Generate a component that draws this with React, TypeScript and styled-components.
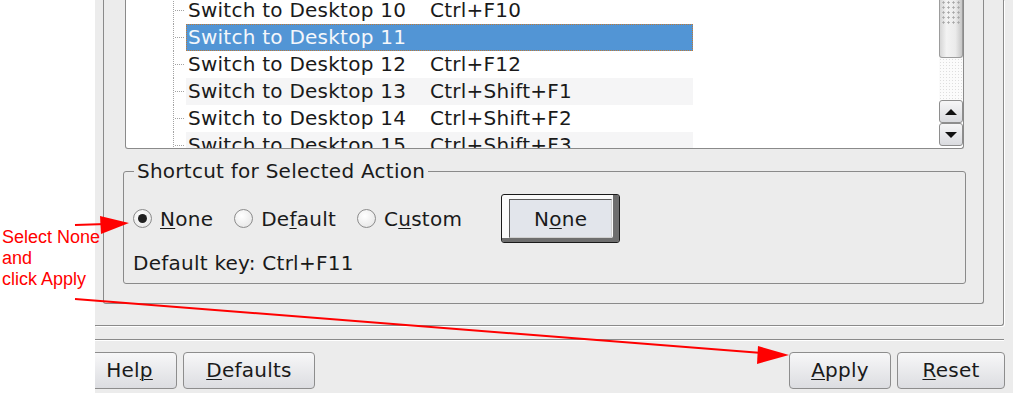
import React from 'react';
import styled, { createGlobalStyle } from 'styled-components';

const GlobalStyle = createGlobalStyle`
  html, body { margin: 0; padding: 0; background: #ffffff; }
  body { font-family: "DejaVu Sans", Verdana, sans-serif; }
`;

const Page = styled.div`
  position: relative;
  width: 1013px;
  height: 407px;
  display: flex;
  overflow: hidden;
  background: #ffffff;
`;

const Gutter = styled.div`
  position: relative;
  z-index: 2;
  width: 95px;
  flex: none;
  box-sizing: border-box;
  padding: 227px 0 0 2px;
  font-family: "Liberation Sans", Arial, sans-serif;
  font-size: 18px;
  line-height: 21px;
  color: #ff0000;
  white-space: nowrap;
`;

const Overlay = styled.svg`
  position: absolute;
  left: 0;
  top: 0;
  z-index: 3;
  pointer-events: none;
`;

const Dialog = styled.div`
  width: 918px;
  height: 393px;
  flex: none;
  display: flex;
  flex-direction: column;
  background: #ececec;
  font-family: "DejaVu Sans", "Bitstream Vera Sans", sans-serif;
  font-size: 20px;
  letter-spacing: 0.25px;
  color: #1a1a1a;
`;

const TabPane = styled.div`
  width: 909px;
  height: 326px;
  box-sizing: border-box;
  padding-left: 8px;
  border-right: 1px solid #8a8a8a;
  border-bottom: 1px solid #8a8a8a;
  border-bottom-right-radius: 3px;
  box-shadow: 1px 1px 0 #ffffff;
`;

const InnerFrame = styled.div`
  width: 881px;
  height: 304px;
  box-sizing: border-box;
  border: 1px solid #8a8a8a;
  border-top: none;
  border-radius: 0 0 3px 3px;
  display: flex;
  flex-direction: column;
`;

const ListBox = styled.div`
  margin-left: 21px;
  width: 839px;
  height: 149px;
  box-sizing: border-box;
  border: 1px solid #8a8a8a;
  border-top: none;
  border-radius: 0 0 3px 3px;
  background: #ffffff;
  display: flex;
  overflow: hidden;
`;

const Rows = styled.div`
  flex: 1;
  overflow: hidden;
`;

const RowsInner = styled.div`
  margin-top: -3px;
`;

const Row = styled.div`
  display: flex;
  height: 27px;
`;

const TreeCell = styled.div`
  position: relative;
  width: 60px;
  flex: none;
  &::before {
    content: '';
    position: absolute;
    left: 47px;
    top: 0;
    bottom: 0;
    width: 1px;
    background: repeating-linear-gradient(to bottom, #a3a3a3 0 1px, transparent 1px 2px);
  }
  &::after {
    content: '';
    position: absolute;
    left: 49px;
    top: 13px;
    width: 10px;
    height: 1px;
    background: repeating-linear-gradient(to right, #a3a3a3 0 1px, transparent 1px 2px);
  }
`;

const Item = styled.div<{ $alt?: boolean; $selected?: boolean }>`
  width: 507px;
  box-sizing: border-box;
  display: flex;
  padding-left: 2px;
  line-height: 27px;
  white-space: nowrap;
  background: ${p => (p.$selected ? '#5295d5' : p.$alt ? '#f5f5f6' : 'transparent')};
  color: ${p => (p.$selected ? '#f4f7fb' : '#1a1a1a')};
  outline: ${p => (p.$selected ? '1px dotted #c07a36' : 'none')};
  outline-offset: -1px;
`;

const ActionName = styled.span`
  width: 242px;
  flex: none;
`;

const Scrollbar = styled.div`
  width: 24px;
  flex: none;
  display: flex;
  flex-direction: column;
`;

const Thumb = styled.div`
  height: 58px;
  box-sizing: border-box;
  border: 1px solid #9c9c9c;
  border-top: none;
  border-radius: 0 0 3px 3px;
  background: linear-gradient(to right, #d6d6d6, #f3f3f3 30%, #ebebeb 70%, #c6c6c6);
  display: flex;
  justify-content: center;
`;

const Grip = styled.div`
  width: 20px;
  height: 26px;
  background-image: radial-gradient(circle, #a8a8a8 0.9px, transparent 1.3px);
  background-size: 5px 5px;
`;

const Track = styled.div`
  height: 42px;
  background-color: #fbfbfb;
  background-image: radial-gradient(circle, #dedede 0.6px, transparent 0.9px);
  background-size: 3px 3px;
`;

const StepButton = styled.div`
  height: 23px;
  box-sizing: border-box;
  border: 1px solid #8e8e8e;
  border-radius: 3px;
  background: linear-gradient(#f6f6f7, #dadbdf);
  display: flex;
  align-items: center;
  justify-content: center;
`;

const Tri = styled.span<{ $down?: boolean }>`
  width: 0;
  height: 0;
  border-left: 6px solid transparent;
  border-right: 6px solid transparent;
  ${p => (p.$down ? 'border-top: 6px solid #111;' : 'border-bottom: 6px solid #111;')}
`;

const GroupBox = styled.fieldset`
  margin: 10px 0 0 19px;
  width: 843px;
  min-width: 0;
  box-sizing: border-box;
  padding: 11px 9px 8px 9px;
  border: 1px solid #8a8a8a;
  border-radius: 3px;
`;

const GroupTitle = styled.legend`
  margin-left: 1px;
  padding: 0 3px;
  line-height: 24px;
`;

const ChoiceRow = styled.div`
  display: flex;
  align-items: center;
  height: 49px;
`;

const Choice = styled.label`
  display: flex;
  align-items: center;
  gap: 8px;
  margin-right: 21px;
  line-height: 24px;
`;

const RadioDot = styled.span<{ $on?: boolean }>`
  width: 19px;
  height: 19px;
  box-sizing: border-box;
  border-radius: 50%;
  border: 1px solid #8b8b8b;
  background: radial-gradient(circle at 40% 35%, #ffffff, #e2e2e2);
  display: flex;
  align-items: center;
  justify-content: center;
  &::after {
    content: '';
    display: ${p => (p.$on ? 'block' : 'none')};
    width: 9px;
    height: 9px;
    border-radius: 50%;
    background: #202020;
  }
`;

const Key = styled.u`
  text-decoration: underline;
  text-underline-offset: 2px;
  text-decoration-thickness: 1px;
`;

const KeyCapture = styled.div`
  margin-left: 18px;
  width: 119px;
  height: 49px;
  box-sizing: border-box;
  border: 1px solid #1a1a1a;
  border-radius: 3px;
  padding: 4px 7px 4px 7px;
  background: #fafafa;
  box-shadow: inset -6px -4px 0 #6e6e6e;
  display: flex;
`;

const KeyFace = styled.div`
  flex: 1;
  border: 1px solid;
  border-color: #5a5a5a #d0d0d0 #d0d0d0 #5a5a5a;
  background: #e2e5eb;
  display: flex;
  align-items: center;
  justify-content: center;
`;

const DefaultKey = styled.div`
  margin-top: 8px;
  line-height: 24px;
`;

const Separator = styled.div`
  margin-top: 13px;
  width: 909px;
  height: 1px;
  background: #8a8a8a;
  box-shadow: 0 1px 0 #ffffff;
`;

const ButtonBar = styled.div`
  margin-top: 12px;
  display: flex;
  height: 37px;
  overflow: hidden;
`;

const PushButton = styled.button<{ $w: number; $ml?: number; $mr?: number }>`
  width: ${p => p.$w}px;
  margin-left: ${p => p.$ml ?? 0}px;
  margin-right: ${p => p.$mr ?? 0}px;
  height: 37px;
  flex: none;
  box-sizing: border-box;
  padding: 0 0 2px;
  border: 1px solid #8d8d8d;
  border-radius: 4px;
  background: linear-gradient(#f7f7f8, #dcdde1);
  font: inherit;
  letter-spacing: inherit;
  color: #1a1a1a;
`;

const Spacer = styled.div`
  flex: 1;
`;

const actions = [
  { name: 'Switch to Desktop 10', key: 'Ctrl+F10' },
  { name: 'Switch to Desktop 11', key: '' },
  { name: 'Switch to Desktop 12', key: 'Ctrl+F12' },
  { name: 'Switch to Desktop 13', key: 'Ctrl+Shift+F1' },
  { name: 'Switch to Desktop 14', key: 'Ctrl+Shift+F2' },
  { name: 'Switch to Desktop 15', key: 'Ctrl+Shift+F3' },
];

export default function App() {
  return (
    <Page>
      <GlobalStyle />
      <Gutter>
        Select None
        <br />
        and
        <br />
        click Apply
      </Gutter>
      <Dialog>
        <TabPane>
          <InnerFrame>
            <ListBox>
              <Rows>
                <RowsInner>
                  {actions.map((a, i) => (
                    <Row key={a.name}>
                      <TreeCell />
                      <Item $alt={i % 2 === 1} $selected={i === 1}>
                        <ActionName>{a.name}</ActionName>
                        <span>{a.key}</span>
                      </Item>
                    </Row>
                  ))}
                </RowsInner>
              </Rows>
              <Scrollbar>
                <Thumb>
                  <Grip />
                </Thumb>
                <Track />
                <StepButton>
                  <Tri />
                </StepButton>
                <StepButton>
                  <Tri $down />
                </StepButton>
              </Scrollbar>
            </ListBox>
            <GroupBox>
              <GroupTitle>Shortcut for Selected Action</GroupTitle>
              <ChoiceRow>
                <Choice>
                  <RadioDot $on />
                  <span><Key>N</Key>one</span>
                </Choice>
                <Choice>
                  <RadioDot />
                  <span>De<Key>f</Key>ault</span>
                </Choice>
                <Choice>
                  <RadioDot />
                  <span>C<Key>u</Key>stom</span>
                </Choice>
                <KeyCapture>
                  <KeyFace>
                    <span>N<Key>o</Key>ne</span>
                  </KeyFace>
                </KeyCapture>
              </ChoiceRow>
              <DefaultKey>Default key: Ctrl+F11</DefaultKey>
            </GroupBox>
          </InnerFrame>
        </TabPane>
        <Separator />
        <ButtonBar>
          <PushButton $w={95} $ml={-13}>Hel<Key>p</Key></PushButton>
          <PushButton $w={132} $ml={6}><Key>D</Key>efaults</PushButton>
          <Spacer />
          <PushButton $w={102}><Key>A</Key>pply</PushButton>
          <PushButton $w={108} $ml={6} $mr={8}><Key>R</Key>eset</PushButton>
        </ButtonBar>
      </Dialog>
      <Overlay width="1013" height="407" viewBox="0 0 1013 407">
        <line x1="75" y1="225" x2="106" y2="224" stroke="#ff0000" strokeWidth="2" />
        <polygon points="129,223 100,216 101,234" fill="#ff0000" />
        <line x1="75" y1="299" x2="762" y2="353" stroke="#ff0000" strokeWidth="2" />
        <polygon points="789,355 758,346 757,364" fill="#ff0000" />
      </Overlay>
    </Page>
  );
}
